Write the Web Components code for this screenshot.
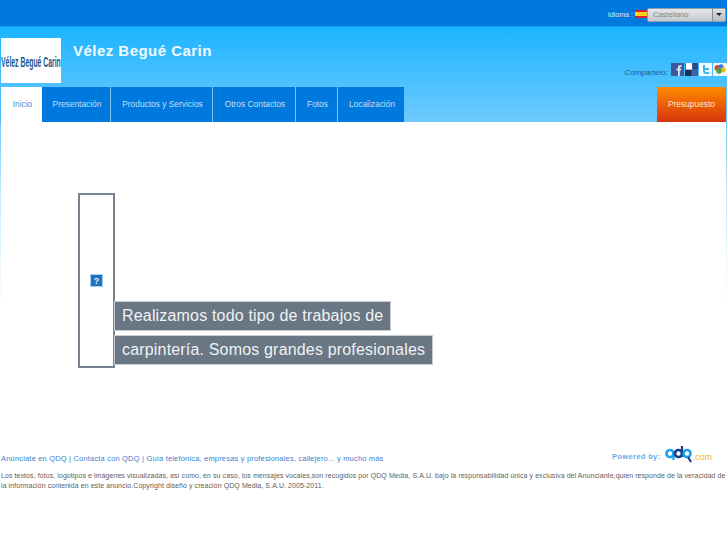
<!DOCTYPE html>
<html><head><meta charset="utf-8"><style>
html,body{margin:0;padding:0;background:#fff}
body{font-family:"Liberation Sans",Arial,sans-serif;width:727px;height:545px;overflow:hidden}
</style></head><body>
<qdq-page></qdq-page>
<script>
function def(name,css,html){
  customElements.define(name,class extends HTMLElement{
    constructor(){super();const r=this.attachShadow({mode:'open'});r.innerHTML='<style>'+css+'</style>'+html;}
  });
}
def('qdq-topbar',`
:host{display:flex;justify-content:flex-end;align-items:flex-start;height:26px;background:#0079de;border-bottom:1px solid #0f9bf2;color:#d8ecfb;font-size:7.1px;padding-right:1px}
.lab{margin:11px 2px 0 0;line-height:9px}
svg{display:block;margin-top:10px}
.sel{width:79px;height:14px;margin-top:8px;box-sizing:border-box;border:1px solid #8aa0ac;border-radius:2px;background:linear-gradient(#e4e6e7,#c6c9cc);display:flex;color:#7c8a94;line-height:12px;font-size:7.5px}
.t{flex:1;padding-left:5px}
.b{width:12px;border-left:1px solid #7e8b94;background:linear-gradient(#dfe1e2,#b8bcbf);position:relative}
.b:after{content:"";position:absolute;left:3px;top:4px;border:3px solid transparent;border-top:3.5px solid #222;border-bottom:0}
`,`<span class="lab">Idioma :</span>
<svg width="12" height="8" viewBox="0 0 12 8"><rect width="12" height="8" fill="#d8222a"/><rect y="2" width="12" height="4" fill="#fdd21e"/></svg>
<div class="sel"><span class="t">Castellano</span><span class="b"></span></div>`);
def('qdq-header',`
:host{display:flex;height:60px;box-sizing:border-box}
.logo{width:60px;height:45px;margin:11px 0 0 1px;background:#fff;flex:none;display:block;color:#17598f;font:bold 15px/48px "Liberation Sans"}
.logo span{display:inline-block;white-space:nowrap;transform-origin:0 50%;transform:scaleX(.457)}
h1{margin:15px 0 0 12px;font-size:15px;line-height:18px;color:#f2faff;font-weight:bold;letter-spacing:.47px}
.share{margin-left:auto;display:flex;align-items:flex-start;padding-top:36px;font-size:8px;color:#1c5f8e;gap:1px}
.share span{margin:5px 2px 0 0;line-height:9px}
svg{display:block}
`,`<div class="logo"><span>Vélez Begué Carin</span></div><h1>Vélez Begué Carin</h1>
<div class="share"><span>Compártelo:</span>
<svg width="13" height="13" viewBox="0 0 13 13"><rect width="13" height="13" fill="#3b5a9a"/><path d="M7 13V7.500H5.500V5.500H7V4.200C7 2.800 8 2 9.300 2H10.500V4H9.500C9 4 8.800 4.200 8.800 4.700V5.500H10.400L10.100 7.500H8.800V13Z" fill="#dfe6f4"/></svg>
<svg width="13" height="13" viewBox="0 0 13 13"><rect width="13" height="13" fill="#4a6fa8"/><rect x="1" width="6" height="6.500" fill="#fff"/><rect x="7.500" width="5.500" height="6.500" fill="#2a4a80"/><rect y="7" width="6.500" height="6" fill="#1d2f55"/><rect x="7.500" y="7" width="5.500" height="6" fill="#3f64a0"/></svg>
<svg width="13" height="13" viewBox="0 0 13 13"><rect width="13" height="13" fill="#f2fbff"/><path d="M4 2V8.200C4 10 5.200 11 7 11H10V9H7.200C6.500 9 6 8.600 6 8V7H10V5H6V2Z" fill="#3fb6ea"/></svg>
<svg width="14" height="13" viewBox="0 0 14 13"><rect width="14" height="13" rx="1" fill="#f4f6f6"/><circle cx="4.500" cy="5" r="3" fill="#d94a2c"/><circle cx="8" cy="3.800" r="2.600" fill="#3b78d8"/><circle cx="10" cy="6.800" r="2.600" fill="#e9b826"/><circle cx="6" cy="8" r="2.700" fill="#3fa64a"/></svg>
</div>`);
def('qdq-nav-item',`
:host{display:flex;align-items:center;justify-content:center;height:35px;box-sizing:border-box;padding:0 0 2px 2px;background:#0079de;color:#c0dff6;font-size:8.4px;border-right:1px solid #7cc4f2;white-space:nowrap}
:host([active]){background:#fff;color:#4a94d8;border-right:0;border-left:1px solid #49b9fd}
`,`<slot></slot>`);
def('qdq-nav',`:host{display:flex;height:35px}`,`<slot></slot>`);
def('qdq-banner',`
:host{display:flex;height:246px;padding:71px 0 0 77px;box-sizing:border-box;background:#fff;margin:0 1px}
.ph{width:37px;height:175px;box-sizing:border-box;border:2px solid #77838f;background:#fff;display:flex;align-items:center;justify-content:center;flex:none}
.cap{display:flex;flex-direction:column;padding-top:108px;gap:4px;align-items:flex-start;margin-left:-1px;position:relative}
.cap span{display:block;height:30px;box-sizing:border-box;background:#697683;color:#f0f2f4;font-size:16px;line-height:29px;padding:0 8px;white-space:nowrap;letter-spacing:.175px;box-shadow:inset 0 0 0 1px #c5ccd4}
svg{display:block}
`,`<div class="ph"><svg width="13" height="13" viewBox="0 0 13 13"><rect x=".5" y=".5" width="12" height="12" fill="#1e73bd" stroke="#a8cdf0"/><text x="6.500" y="10" font-size="9" font-family="Liberation Sans" font-weight="bold" text-anchor="middle" fill="#e8f2fb">?</text></svg></div>
<div class="cap"><span>Realizamos todo tipo de trabajos de</span><span>carpintería. Somos grandes profesionales</span></div>`);
def('qdq-footer',`
:host{display:block;padding:0 1px;background:#fff;font-size:7.5px}
.top{display:flex;justify-content:space-between;align-items:flex-start;height:30px}
.links{color:#3b7fce;letter-spacing:.18px;margin-top:13px;line-height:10px}
.pw{display:flex;align-items:flex-start;color:#6aa8e8;font-weight:bold;letter-spacing:.36px;margin-right:14px}
.lb{margin-top:11px;line-height:10px}
.com{color:#f0b429;font-size:9px;font-weight:normal;letter-spacing:0;margin:10px 0 0;line-height:12px}
p{margin:0;color:#606060;font-size:7px;line-height:10px;width:726px;letter-spacing:.075px}
svg{display:block;margin:5px 0 0 5px}
`,`<div class="top"><div class="links">Anúnciate en QDQ | Contacta con QDQ | Guía telefónica, empresas y profesionales, callejero... y mucho más</div>
<div class="pw"><span class="lb">Powered by:</span>
<svg width="27" height="17" viewBox="0 0 27 17" fill="none"><circle cx="5" cy="7.500" r="3.500" stroke="#1aa0e8" stroke-width="2.600"/><path d="M8.500 8V14" stroke="#1aa0e8" stroke-width="2.200"/><circle cx="13.500" cy="7.500" r="3.500" stroke="#123f8c" stroke-width="2.600"/><path d="M17 0V11" stroke="#123f8c" stroke-width="2.200"/><circle cx="22" cy="7.500" r="3.500" stroke="#1aa0e8" stroke-width="2.600"/><path d="M23 11L26 16" stroke="#123f8c" stroke-width="2.200"/></svg>
<span class="com">.com</span></div></div>
<p>Los textos, fotos, logotipos e imágenes visualizadas, así como, en su caso, los mensajes vocales,son recogidos por QDQ Media, S.A.U. bajo la responsabilidad única y exclusiva del Anunciante,quien responde de la veracidad de la información contenida en este anuncio.Copyright diseño y creación QDQ Media, S.A.U. 2005-2011.</p>`);
def('qdq-page',`
:host{display:block;width:727px;height:545px;background:linear-gradient(#1cb4ff 27px,#6fcaff 122px,#c8ecff 200px,#fff 312px)}
`,`<qdq-topbar></qdq-topbar><qdq-header></qdq-header>
<qdq-nav>
<qdq-nav-item active style="width:42px">Inicio</qdq-nav-item>
<qdq-nav-item style="width:69px">Presentación</qdq-nav-item>
<qdq-nav-item style="width:102px">Productos y Servicios</qdq-nav-item>
<qdq-nav-item style="width:83px">Otros Contactos</qdq-nav-item>
<qdq-nav-item style="width:42px">Fotos</qdq-nav-item>
<qdq-nav-item style="width:66px;border-right:0">Localización</qdq-nav-item>
<span style="flex:1"></span>
<qdq-nav-item style="width:69px;margin-right:1px;border:0;padding-left:0;color:#fbe6d0;background:linear-gradient(#ff8a00,#d8340a)">Presupuesto</qdq-nav-item>
</qdq-nav>
<qdq-banner></qdq-banner>
<qdq-footer style="margin-top:73px"></qdq-footer>`);
</script>
</body></html>
